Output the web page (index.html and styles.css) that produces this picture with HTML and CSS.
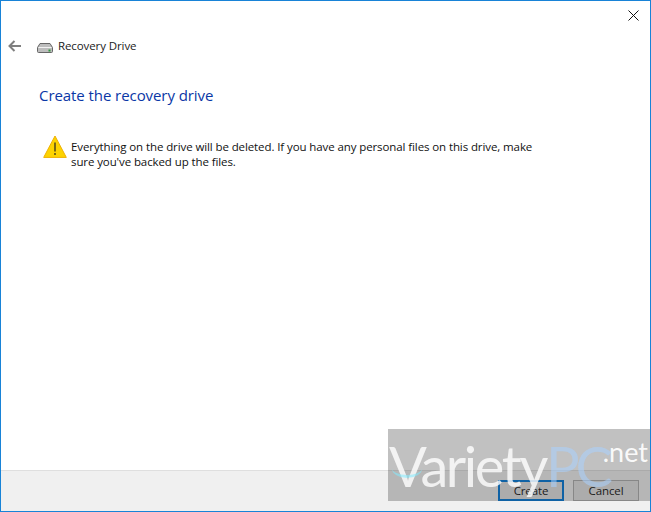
FILE: index.html
```html
<!DOCTYPE html>
<html lang="en">
<head>
<meta charset="utf-8">
<title>Recovery Drive</title>
<link rel="stylesheet" href="styles.css">
</head>
<body>
<div class="window">
  <div class="titlebar">
    <svg class="close" width="11" height="11" viewBox="0 0 11 11"><path d="M.5.5l10 10M10.5.5l-10 10" stroke="#111" stroke-width="1" fill="none"/></svg>
  </div>
  <div class="nav">
    <svg class="back" width="14" height="12" viewBox="0 0 14 12"><path d="M6.5 1L1.5 6l5 5M1.5 6H13" stroke="#7f7f7f" stroke-width="2" fill="none"/></svg>
    <svg class="drive" width="16" height="10" viewBox="0 0 16 10">
      <path d="M3 .5h10L15.5 4.5v4a1 1 0 0 1-1 1h-13a1 1 0 0 1-1-1v-4z" fill="#bdbdbd" stroke="#666"/>
      <path d="M1.5 4.5h13" stroke="#f2f2f2"/>
      <rect x="11.5" y="6.5" width="2" height="2" fill="#2f9a3a"/>
    </svg>
    <span class="nav-title">Recovery Drive</span>
  </div>
  <main class="content">
    <h1 class="heading">Create the recovery drive</h1>
    <div class="warning">
      <svg class="warn-icon" width="24" height="23" viewBox="0 0 24 23">
        <path d="M12 1L23.3 22.4H.7z" fill="#fdd300" stroke="#eeb000" stroke-width="1" stroke-linejoin="round"/>
        <path d="M12 7.5v9" stroke="#222" stroke-width="1.2"/>
        <path d="M12 18v2" stroke="#222" stroke-width="1.2"/>
      </svg>
      <p class="warn-text">Everything on the drive will be deleted. If you have any personal files on this drive, make sure you've backed up the files.</p>
    </div>
  </main>
  <footer class="footer">
    <button class="btn btn-default">Create</button>
    <button class="btn">Cancel</button>
  </footer>
</div>
<div class="watermark">
  <span class="wm-glow"></span>
  <div class="wm-row">
    <span class="wm-name">Variety</span><span class="wm-pc">PC</span>
  </div>
  <span class="wm-net">.net</span>
</div>
</body>
</html>
```
FILE: styles.css
```css
html, body {
  margin: 0;
  padding: 0;
  height: 100%;
  overflow: hidden;
  background: #fff;
}
body {
  font-family: "Open Sans", "Noto Sans", sans-serif;
  position: relative;
  width: 651px;
  height: 512px;
}
.window {
  box-sizing: border-box;
  width: 651px;
  height: 512px;
  border: 1px solid #1883d7;
  display: flex;
  flex-direction: column;
  background: #fff;
}
.titlebar {
  height: 29px;
  display: flex;
  justify-content: flex-end;
  align-items: flex-start;
  padding: 9px 11px 0 0;
  box-sizing: border-box;
}
.nav {
  height: 31px;
  display: flex;
  align-items: center;
  padding-left: 7px;
}
.drive { margin-left: 15px; margin-top: 4px; }
.nav-title {
  margin-left: 5px;
  font-size: 11.5px;
  letter-spacing: -.1px;
  color: #222;
}
.content {
  flex: 1;
  padding: 0 0 0 38px;
}
.heading {
  margin: 23px 0 0;
  font-size: 15px;
  line-height: 22px;
  font-weight: 400;
  letter-spacing: -.07px;
  color: #0a37a6;
}
.warning {
  display: flex;
  margin: 29px 0 0 4px;
  align-items: flex-start;
}
.warn-icon { flex: none; margin-top: 0; }
.warn-text {
  margin: 4px 0 0 4px;
  width: 475px;
  font-size: 11.5px;
  line-height: 15px;
  letter-spacing: -.1px;
  color: #111;
}
.footer {
  height: 41px;
  box-sizing: border-box;
  background: #f0f0f0;
  border-top: 1px solid #dfdfdf;
  display: flex;
  justify-content: flex-end;
  align-items: flex-start;
  gap: 9px;
  padding: 9px 11px 0 0;
}
.btn {
  box-sizing: border-box;
  width: 66px;
  height: 21px;
  padding: 0;
  background: #e1e1e1;
  border: 1px solid #adadad;
  border-radius: 0;
  font-family: inherit;
  font-size: 11.5px;
  letter-spacing: -.1px;
  color: #111;
}
.btn-default { border: 2px solid #0078d7; }
.watermark {
  position: absolute;
  left: 388px;
  top: 429px;
  width: 262px;
  height: 72px;
  background: rgba(50, 50, 50, .3);
  overflow: hidden;
  font-family: Lato, "Open Sans", sans-serif;
}
.wm-row {
  display: flex;
  align-items: baseline;
  white-space: nowrap;
  padding: 2px 0 0 1px;
  line-height: 70px;
}
.wm-name {
  font-size: 56px;
  letter-spacing: -2.4px;
  color: rgba(255, 255, 255, .8);
}
.wm-pc {
  font-size: 56px;
  letter-spacing: -4px;
  color: rgba(170, 210, 255, .55);
}
.wm-net {
  position: absolute;
  right: 2px;
  top: 0;
  font-size: 27px;
  line-height: 46px;
  color: rgba(255, 255, 255, .92);
}
.wm-glow {
  position: absolute;
  left: 4px;
  top: 30px;
  width: 30px;
  height: 16px;
  border-bottom: 3px solid rgba(130, 235, 255, .55);
  border-radius: 50%;
}
```
